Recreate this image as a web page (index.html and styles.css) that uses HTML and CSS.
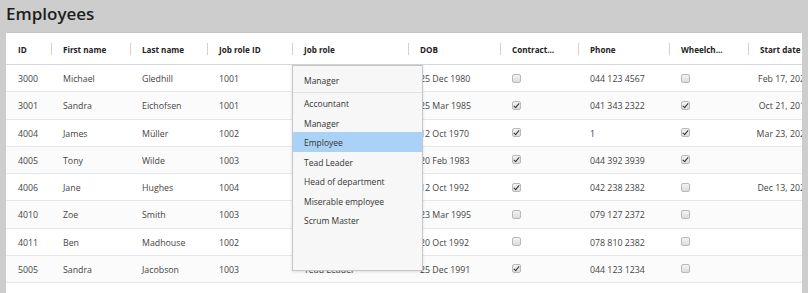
FILE: index.html
```html
<!DOCTYPE html>
<html>
<head>
<meta charset="utf-8">
<link rel="stylesheet" href="styles.css">
</head>
<body>
<h1 class="title">Employees</h1>
<div class="card">
  <div class="row head">
    <div class="cell">ID</div>
    <div class="cell sep">First name</div>
    <div class="cell sep">Last name</div>
    <div class="cell sep">Job role ID</div>
    <div class="cell sep">Job role</div>
    <div class="cell sep">DOB</div>
    <div class="cell sep">Contract...</div>
    <div class="cell sep">Phone</div>
    <div class="cell sep">Wheelch...</div>
    <div class="cell sep">Start date</div>
  </div>

  <div class="row">
    <div class="cell">3000</div><div class="cell">Michael</div><div class="cell">Gledhill</div><div class="cell">1001</div><div class="cell">Manager</div><div class="cell">25 Dec 1980</div>
    <div class="cell"><span class="cb"></span></div><div class="cell">044 123 4567</div><div class="cell"><span class="cb"></span></div><div class="cell date">Feb 17, 2021</div>
  </div>
  <div class="row alt">
    <div class="cell">3001</div><div class="cell">Sandra</div><div class="cell">Eichofsen</div><div class="cell">1001</div><div class="cell">Manager</div><div class="cell">25 Mar 1985</div>
    <div class="cell"><span class="cb on"></span></div><div class="cell">041 343 2322</div><div class="cell"><span class="cb on"></span></div><div class="cell date">Oct 21, 2019</div>
  </div>
  <div class="row">
    <div class="cell">4004</div><div class="cell">James</div><div class="cell">Müller</div><div class="cell">1002</div><div class="cell">Employee</div><div class="cell">12 Oct 1970</div>
    <div class="cell"><span class="cb on"></span></div><div class="cell">1</div><div class="cell"><span class="cb on"></span></div><div class="cell date">Mar 23, 2020</div>
  </div>
  <div class="row alt">
    <div class="cell">4005</div><div class="cell">Tony</div><div class="cell">Wilde</div><div class="cell">1003</div><div class="cell">Tead Leader</div><div class="cell">20 Feb 1983</div>
    <div class="cell"><span class="cb on"></span></div><div class="cell">044 392 3939</div><div class="cell"><span class="cb on"></span></div><div class="cell date"></div>
  </div>
  <div class="row">
    <div class="cell">4006</div><div class="cell">Jane</div><div class="cell">Hughes</div><div class="cell">1004</div><div class="cell">Head of department</div><div class="cell">12 Oct 1992</div>
    <div class="cell"><span class="cb on"></span></div><div class="cell">042 238 2382</div><div class="cell"><span class="cb"></span></div><div class="cell date">Dec 13, 2020</div>
  </div>
  <div class="row alt">
    <div class="cell">4010</div><div class="cell">Zoe</div><div class="cell">Smith</div><div class="cell">1003</div><div class="cell">Tead Leader</div><div class="cell">23 Mar 1995</div>
    <div class="cell"><span class="cb"></span></div><div class="cell">079 127 2372</div><div class="cell"><span class="cb"></span></div><div class="cell date"></div>
  </div>
  <div class="row">
    <div class="cell">4011</div><div class="cell">Ben</div><div class="cell">Madhouse</div><div class="cell">1002</div><div class="cell">Employee</div><div class="cell">20 Oct 1992</div>
    <div class="cell"><span class="cb"></span></div><div class="cell">078 810 2382</div><div class="cell"><span class="cb"></span></div><div class="cell date"></div>
  </div>
  <div class="row alt">
    <div class="cell">5005</div><div class="cell">Sandra</div><div class="cell">Jacobson</div><div class="cell">1003</div><div class="cell">Tead Leader</div><div class="cell">25 Dec 1991</div>
    <div class="cell"><span class="cb on"></span></div><div class="cell">044 123 1234</div><div class="cell"><span class="cb"></span></div><div class="cell date"></div>
  </div>

  <div class="dropdown">
    <div class="current">Manager</div>
    <ul class="options">
      <li>Accountant</li>
      <li>Manager</li>
      <li class="hl">Employee</li>
      <li>Tead Leader</li>
      <li>Head of department</li>
      <li>Miserable employee</li>
      <li>Scrum Master</li>
    </ul>
  </div>
</div>
</body>
</html>
```

FILE: styles.css
```css
* { box-sizing: border-box; }
html, body { margin: 0; padding: 0; }
body {
  background: #cdcdcd;
  font-family: "Open Sans", "Noto Sans", sans-serif;
  width: 808px;
  height: 293px;
  overflow: hidden;
  padding: 0 6px 0 6px;
}
.title {
  margin: 0;
  height: 32px;
  font-size: 17px;
  font-weight: 600;
  color: #1e1e1e;
  line-height: 28px;
}
.card {
  position: relative;
  background: #fff;
  height: 261px;
  overflow: hidden;
  border-top: 1px solid #c4c4c4;
}
.row {
  display: grid;
  grid-template-columns: 45px 79px 77px 85px 116px 92px 78px 91px 79px 120px;
  height: 27.25px;
  border-bottom: 1px solid #e4e6ea;
  font-size: 8.8px;
  color: #444;
  background: #fff;
}
.row.alt { background: #fbfbfb; }
.row.head {
  height: 32px;
  border-bottom: 1px solid #d3d6db;
  font-weight: 700;
  color: #222;
  font-size: 8.1px;
}
.cell {
  display: flex;
  align-items: center;
  padding-left: 12px;
  padding-top: 2px;
  white-space: nowrap;
  overflow: hidden;
}
.cell.sep {
  background: linear-gradient(#d0d0d0, #d0d0d0) left center / 1px 12px no-repeat;
}
.cell.date {
  justify-content: flex-end;
  padding-right: 58px;
  overflow: visible;
}
.cb {
  width: 9px;
  height: 9px;
  margin-top: -2px;
  border: 1px solid #b9b9b9;
  border-radius: 2px;
  background: linear-gradient(#f3f3f3, #dcdcdc);
  position: relative;
}
.cb.on::after {
  content: "";
  position: absolute;
  left: 2px;
  top: 0px;
  width: 2px;
  height: 5px;
  border: solid #333;
  border-width: 0 1.5px 1.5px 0;
  transform: rotate(40deg);
}
.dropdown {
  position: absolute;
  left: 286px;
  top: 32px;
  width: 131px;
  height: 206px;
  background: #f7f7f7;
  border: 1px solid #c6c6c6;
  box-shadow: 0 1px 3px rgba(0,0,0,0.12);
  font-size: 8.5px;
  color: #333;
}
.current {
  height: 27px;
  line-height: 27px;
  padding-left: 11px;
  padding-top: 1px;
  border-bottom: 1px solid #e2e2e2;
}
.options {
  list-style: none;
  margin: 0;
  padding: 0;
}
.options li {
  height: 19.5px;
  line-height: 21px;
  padding-left: 11px;
}
.options li.hl { background: #a9d2f6; }
```
